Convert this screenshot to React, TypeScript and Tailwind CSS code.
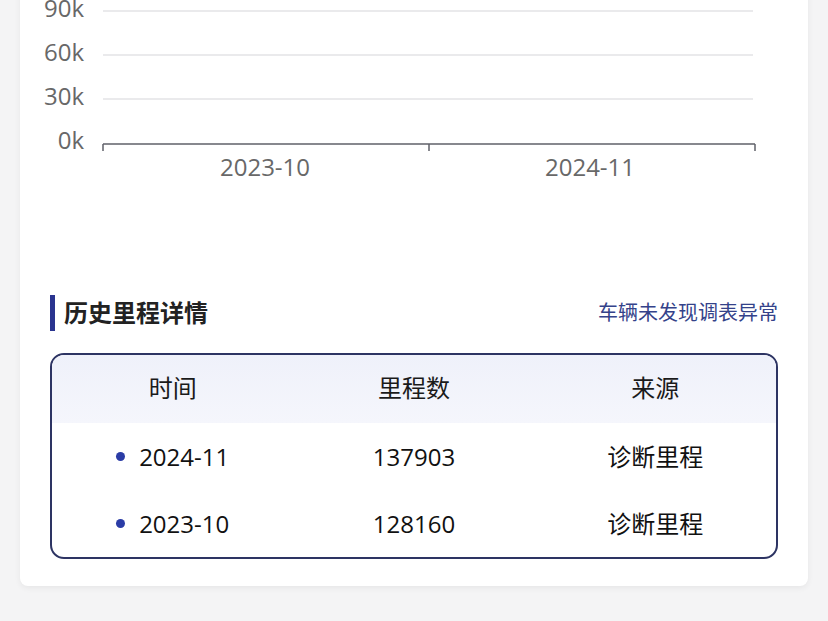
import React from 'react';

const rows = [
  { date: '2024-11', mileage: '137903', source: '诊断里程' },
  { date: '2023-10', mileage: '128160', source: '诊断里程' },
];

const font = { fontFamily: "'Open Sans', 'Noto Sans CJK SC', sans-serif" };

// chart coordinates are relative to the card (card starts at x=20, y=-40)
const gridY = [51, 95, 139];
const yLabels = ['90k', '60k', '30k'];

function MileageChart() {
  return (
    <svg width="788" height="240" className="block" style={font}>
      {gridY.map((y, i) => (
        <g key={y}>
          <line x1="83" x2="733" y1={y} y2={y} stroke="#e3e3e6" strokeWidth="1.5" />
          <text x="64" y={y} textAnchor="end" dominantBaseline="middle" fontSize="24" fill="#686868">
            {yLabels[i]}
          </text>
        </g>
      ))}
      <text x="64" y="183" textAnchor="end" dominantBaseline="middle" fontSize="24" fill="#686868">
        0k
      </text>
      <line x1="83" x2="735" y1="184" y2="184" stroke="#5f6068" strokeWidth="1.6" />
      {[83, 409, 735].map((x) => (
        <line key={x} x1={x} x2={x} y1="184" y2="191" stroke="#5f6068" strokeWidth="1.5" />
      ))}
      <text x="245" y="210" textAnchor="middle" dominantBaseline="middle" fontSize="24" fill="#686868">
        2023-10
      </text>
      <text x="570" y="210" textAnchor="middle" dominantBaseline="middle" fontSize="24" fill="#686868">
        2024-11
      </text>
    </svg>
  );
}

export default function App() {
  return (
    <div className="h-[621px] w-[828px] overflow-hidden bg-[#f4f4f5]" style={font}>
      <div className="ml-[20px] -mt-[40px] w-[788px] rounded-[8px] bg-white pb-[27px] shadow-[0_2px_6px_rgba(0,0,0,0.06)]">
        <MileageChart />

        <div className="mt-[95px] flex h-[36px] items-center justify-between px-[30px]">
          <div className="flex h-full items-center gap-[9px]">
            <span className="h-[36px] w-[5px] bg-[#2a348f]" />
            <h2 className="text-[24px] font-bold leading-none text-[#222]">历史里程详情</h2>
          </div>
          <span className="text-[20px] leading-none text-[#34428a]">车辆未发现调表异常</span>
        </div>

        <div className="mx-[30px] mt-[22px] overflow-hidden rounded-[14px] border-2 border-[#2d3463]">
          <div className="grid h-[68px] grid-cols-3 items-center bg-gradient-to-b from-[#eff1fa] to-[#f5f6fc] pb-[3px] text-center text-[24px] text-[#1a1a1a]">
            <span>时间</span>
            <span>里程数</span>
            <span>来源</span>
          </div>
          {rows.map((r) => (
            <div key={r.date} className="grid h-[67px] grid-cols-3 items-center text-center text-[24px] text-[#111]">
              <div className="flex items-center justify-center gap-[14px]">
                <span className="h-[9px] w-[9px] rounded-full bg-[#2b3ca6]" />
                <span>{r.date}</span>
              </div>
              <span>{r.mileage}</span>
              <span>{r.source}</span>
            </div>
          ))}
        </div>
      </div>
    </div>
  );
}
